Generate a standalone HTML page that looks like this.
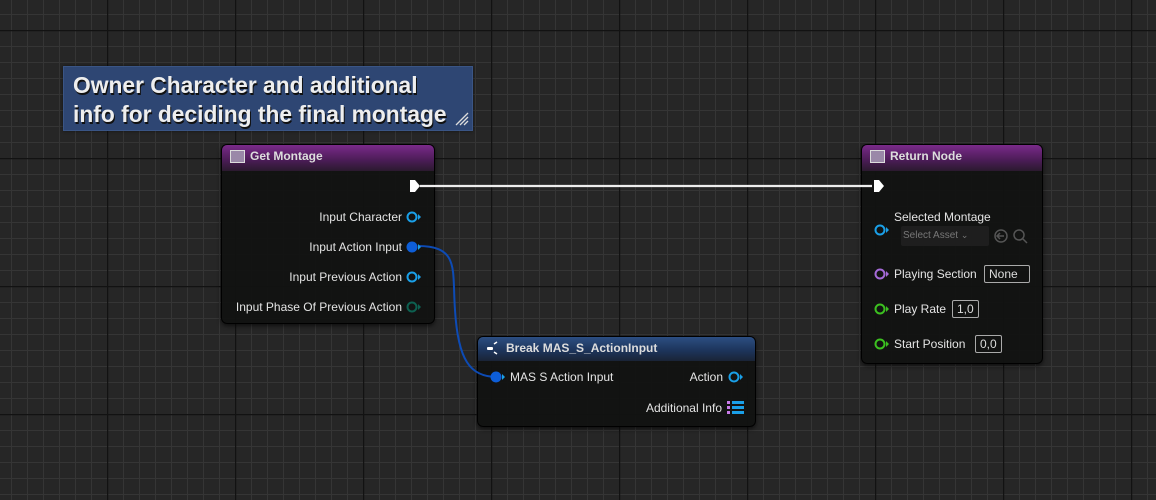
<!DOCTYPE html>
<html><head><meta charset="utf-8"><style>
*{margin:0;padding:0;box-sizing:border-box}
body{width:1156px;height:500px;overflow:hidden;background:#262626;font-family:"Liberation Sans",sans-serif;position:relative}
.node{position:absolute;background:rgba(18,19,18,0.96);border:1px solid #000;border-radius:6px;box-shadow:0 2px 4px rgba(0,0,0,.6)}
.hdr{height:26px;border-radius:5px 5px 0 0;color:#ddd;font-weight:bold;font-size:12px;line-height:23px;padding-left:28px;position:relative}
.hdr .ic{position:absolute;left:8px;top:5px;width:15px;height:13px;border:1.5px solid #ddd;background:#9a88a8}
.purple{background:linear-gradient(#7a2a8a,#4a1c55 60%,#2a1a2e)}
.blue{background:linear-gradient(#2c4e82,#1c3358 60%,#1a2436)}
.t{position:absolute;color:#e4e4e4;font-size:12px;white-space:nowrap}
.box{position:absolute;border:1px solid #aaa;color:#ddd;font-size:12px;height:18px;line-height:16px;padding:0 4px;border-radius:2px}
</style></head><body>
<svg width="1156" height="500" style="position:absolute;left:0;top:0">
<defs>
<pattern id="mn" width="16" height="16" patternUnits="userSpaceOnUse" x="11" y="14">
<path d="M0.5 0V16M0 0.5H16" stroke="#353535" stroke-width="1"/></pattern>
<pattern id="mj" width="128" height="128" patternUnits="userSpaceOnUse" x="107" y="30">
<path d="M0.5 0V128M0 0.5H128" stroke="#121212" stroke-width="1.5"/></pattern>
</defs>
<rect width="1156" height="500" fill="url(#mn)"/>
<rect width="1156" height="500" fill="url(#mj)"/>
</svg>
<div style="position:absolute;left:63px;top:66px;width:410px;height:65px;background:#2e4673;border:1px solid #3a5585;box-shadow:0 0 3px rgba(0,0,0,.5)">
<div style="position:absolute;left:9px;top:4px;color:#eee;font-weight:bold;font-size:22.8px;line-height:29px;text-shadow:1px 2px 0 #111;white-space:nowrap">Owner Character and additional<br>info for deciding the final montage</div>
<svg width="14" height="14" style="position:absolute;right:3px;bottom:4px"><path d="M1 13L13 1M5 13L13 5M9 13L13 9" stroke="#ddd" stroke-width="1.3"/></svg>
</div>

<div class="node" style="left:221px;top:144px;width:214px;height:180px">
<div class="hdr purple"><div class="ic"></div>Get Montage</div>
</div>
<div class="node" style="left:861px;top:144px;width:182px;height:220px">
<div class="hdr purple"><div class="ic"></div>Return Node</div>
</div>
<div class="node" style="left:477px;top:336px;width:279px;height:91px">
<div class="hdr blue" style="height:24px;line-height:22px">Break MAS_S_ActionInput</div>
</div>

<svg width="1156" height="500" style="position:absolute;left:0;top:0">
<path d="M420 186H872" stroke="#eee" stroke-width="2.2"/>
<path d="M418 246C460 246 452 270 455 310C458 360 470 377 497 377" stroke="#0d4bb5" stroke-width="2" fill="none"/>
<path d="M410 180h5l5 6l-5 6h-5z" fill="#fff"/>
<path d="M874 180h5l5 6l-5 6h-5z" fill="#fff"/>
<g fill="none" stroke-width="2">
<circle cx="412" cy="217" r="4.5" stroke="#1aa0e8"/>
<circle cx="412" cy="277" r="4.5" stroke="#1aa0e8"/>
<circle cx="412" cy="307" r="4.5" stroke="#0d6050"/>
<circle cx="880" cy="230" r="4.5" stroke="#1aa0e8"/>
<circle cx="880" cy="274" r="4.5" stroke="#a56ad8"/>
<circle cx="880" cy="309" r="4.5" stroke="#3cc020"/>
<circle cx="880" cy="344" r="4.5" stroke="#3cc020"/>
<circle cx="734" cy="377" r="4.5" stroke="#1aa0e8"/>
<circle cx="1001" cy="236" r="6" stroke="#555" stroke-width="1.5"/>
<circle cx="1019" cy="235" r="5" stroke="#555" stroke-width="1.5"/>
<path d="M1023 239l4 4M1004 236h-6M1000 233l-3 3l3 3" stroke="#555" stroke-width="1.5"/>
</g>
<circle cx="412" cy="247" r="5.5" fill="#0d5ed8"/>
<circle cx="496" cy="377" r="5.5" fill="#0d5ed8"/>
<g fill="#1aa0e8"><path d="M418 214l3 3l-3 3z"/><path d="M418 244l3 3l-3 3z"/><path d="M418 274l3 3l-3 3z"/><path d="M886 227l3 3l-3 3z"/><path d="M740 374l3 3l-3 3z"/><path d="M502 374l3 3l-3 3z"/></g>
<path d="M418 304l3 3l-3 3z" fill="#0d6050"/>
<path d="M886 271l3 3l-3 3z" fill="#a56ad8"/>
<path d="M886 306l3 3l-3 3zM886 341l3 3l-3 3z" fill="#3cc020"/>
<rect x="727" y="401" width="3" height="3" fill="#c87ae8"/><rect x="727" y="406" width="3" height="3" fill="#c87ae8"/><rect x="727" y="411" width="3" height="3" fill="#c87ae8"/>
<rect x="732" y="401" width="12" height="3" fill="#1aa0e8"/><rect x="732" y="406" width="12" height="3" fill="#1aa0e8"/><rect x="732" y="411" width="12" height="3" fill="#1aa0e8"/>
<path d="M494 344l3 -2M494 352l3 2" stroke="#fff" stroke-width="1.5"/>
<rect x="487" y="347" width="6" height="3" rx="1" fill="#fff"/>
</svg>

<div class="t" style="right:754px;top:210px">Input Character</div>
<div class="t" style="right:754px;top:240px">Input Action Input</div>
<div class="t" style="right:754px;top:270px">Input Previous Action</div>
<div class="t" style="right:754px;top:300px">Input Phase Of Previous Action</div>

<div class="t" style="left:894px;top:210px">Selected Montage</div>
<div style="position:absolute;left:901px;top:226px;width:88px;height:20px;background:#1e1e1e;border-radius:2px;color:#777;font-size:10px;line-height:19px;padding-left:2px">Select Asset <span style="font-size:9px">&#8964;</span></div>
<div class="t" style="left:894px;top:267px">Playing Section</div>
<div class="box" style="left:984px;top:265px;width:46px">None</div>
<div class="t" style="left:894px;top:302px">Play Rate</div>
<div class="box" style="left:952px;top:300px">1,0</div>
<div class="t" style="left:894px;top:337px">Start Position</div>
<div class="box" style="left:975px;top:335px">0,0</div>

<div class="t" style="left:510px;top:370px">MAS S Action Input</div>
<div class="t" style="right:433px;top:370px">Action</div>
<div class="t" style="right:434px;top:401px">Additional Info</div>
</body></html>
